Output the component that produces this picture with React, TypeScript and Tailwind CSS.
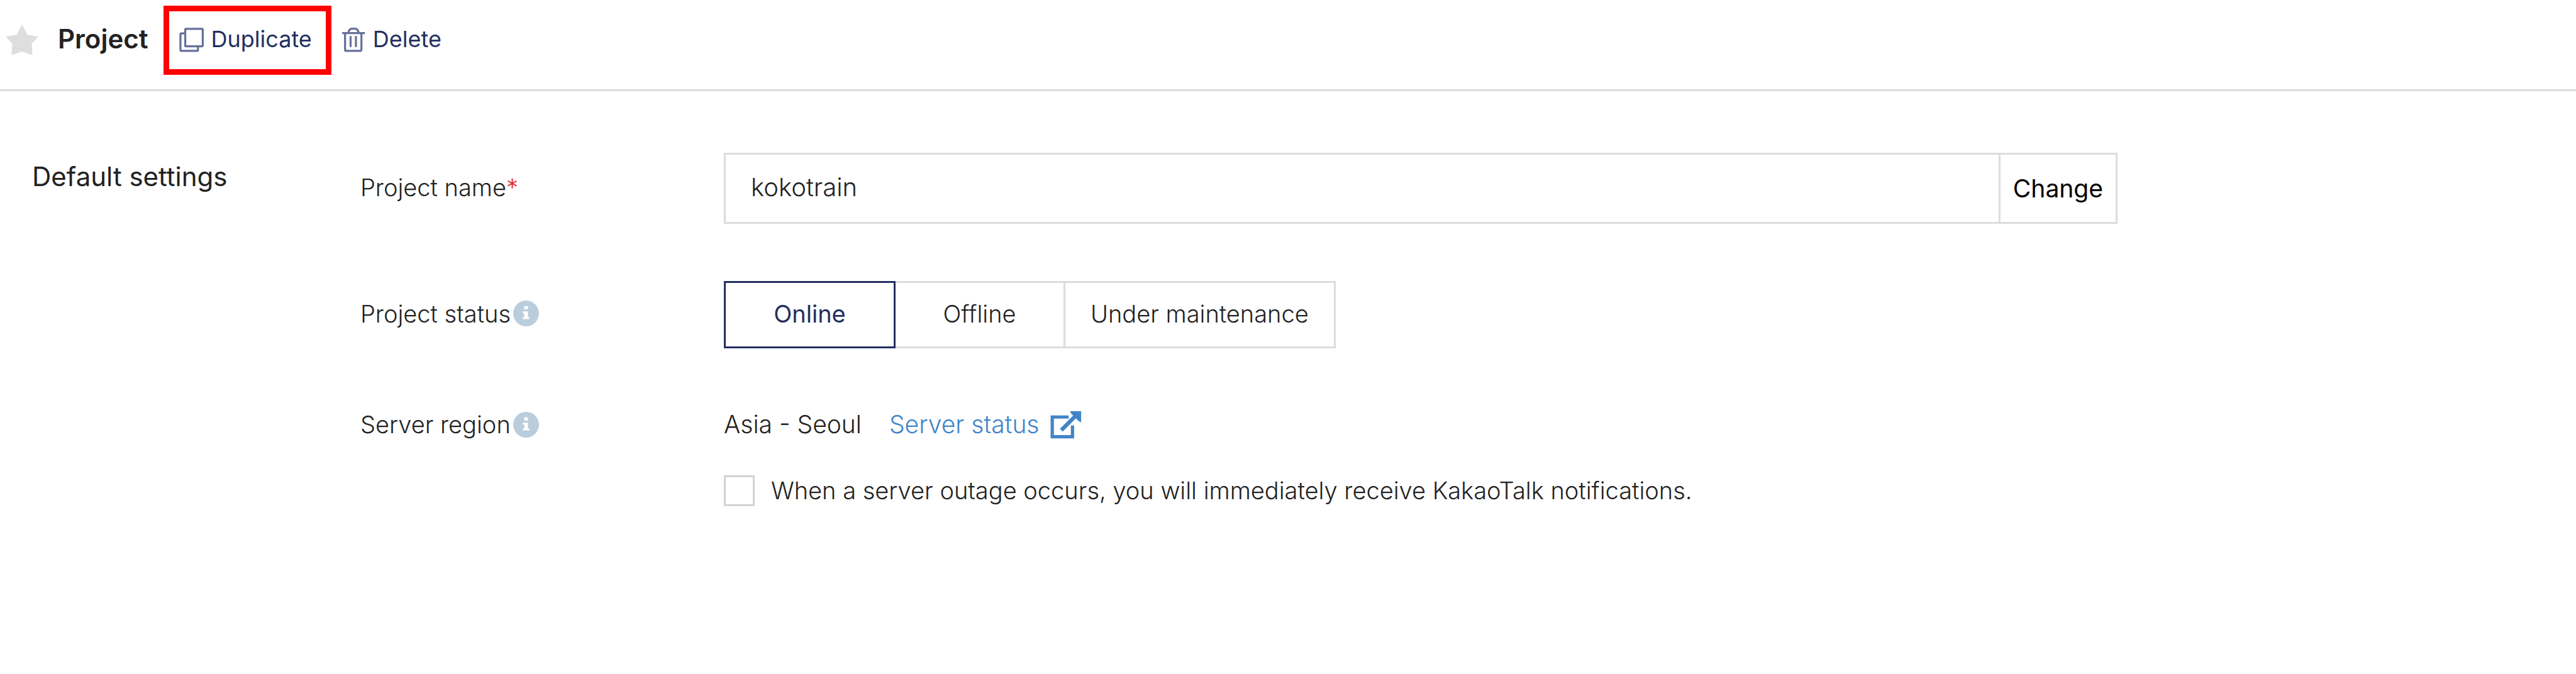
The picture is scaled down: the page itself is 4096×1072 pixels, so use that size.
import { useState } from 'react'
import type { ReactNode } from 'react'
import clsx from 'clsx'

const STATUSES = ['Online', 'Offline', 'Under maintenance']

function StarIcon() {
    return (
        <svg viewBox="3 3 18 18" className="h-[52px] w-[52px] fill-[#dedede]" aria-hidden="true">
            <path d="M12 3.3 14.9 9 21 10 17.3 14 17.8 20.2 12 18.2 6.2 20.2 6.7 14 3 10 9.1 9z" />
        </svg>
    )
}

function DuplicateIcon() {
    return (
        <svg viewBox="3 4 14 14" className="h-[41px] w-[41px] fill-none stroke-[#66709a]" strokeWidth="1.1" aria-hidden="true">
            <rect x="6.6" y="5.3" width="9.5" height="9.5" rx="0.4" />
            <path d="M6.6 7.8H4.5a.5.5 0 0 0-.5.5v8.5a.5.5 0 0 0 .5.5H13a.5.5 0 0 0 .5-.5v-2" />
        </svg>
    )
}

function TrashIcon() {
    return (
        <svg viewBox="3 4 13 14" className="h-[41px] w-[38px] fill-none stroke-[#66709a]" strokeWidth="1.1" aria-hidden="true">
            <path d="M3 7.6h12.4M6.4 7.6c.2-1.6 1-2.4 2.1-2.4h1.4c1.1 0 1.9.8 2.1 2.4" />
            <path d="M4.6 7.6v9.1a.6.6 0 0 0 .6.6h7.7a.6.6 0 0 0 .6-.6V7.6M7.6 9.2v6M10.5 9.2v6" />
        </svg>
    )
}

function InfoIcon() {
    return (
        <svg viewBox="0 0 14 14" className="h-[41px] w-[41px]" role="img" aria-label="More information">
            <circle cx="7" cy="7" r="7" fill="#bacddd" />
            <path fill="#fff" d="M6 3h2v1.8H6zM5.2 5.9H8v3.2h.8v1H5.2v-1H6V6.9h-.8z" />
        </svg>
    )
}

function ExternalIcon() {
    return (
        <svg viewBox="4 3 18 16" className="h-[46px] w-[52px]" aria-hidden="true">
            <path fill="none" stroke="#4284c8" strokeWidth="1.8" d="M14.5 6.9H5.4v10.9h11.2v-6.2" />
            <path fill="none" stroke="#4284c8" strokeWidth="2.2" d="M10.4 14.2 18.6 6" />
            <path fill="#4284c8" d="M15.2 3.7h6.2v6.2l-1.6-.9-3.8-3.8z" />
        </svg>
    )
}

interface IRowProps {
    label: ReactNode;
    children: ReactNode;
}

function Row({ label, children }: IRowProps) {
    return (
        <div className="grid grid-cols-[578px_1fr] items-center">
            <div className="flex items-center gap-1 pb-1">{label}</div>
            {children}
        </div>
    )
}

export default function App() {
    const [name, setName] = useState('kokotrain')
    const [status, setStatus] = useState('Online')
    const [notify, setNotify] = useState(false)

    return (
        <div className="bg-white font-['Inter','Noto_Sans_CJK_KR',sans-serif] text-[38px] leading-[60px] font-light text-[#222]">
            <header className="flex items-center border-b-3 border-[#dcdcdc] pt-[9px] pb-[23px] pl-[9px]">
                <button type="button" aria-label="Favorite">
                    <StarIcon />
                </button>
                <h1 className="ml-[31px] pb-1 text-[42px] font-semibold">Project</h1>
                {/* Highlighted action */}
                <div className="ml-6 flex h-[110px] items-center border-9 border-[#ff0000] px-[15px] pr-[22px] pb-1">
                    <button type="button" className="flex items-center gap-[11px] text-[36px] font-normal text-[#232f5f]">
                        <DuplicateIcon />
                        Duplicate
                    </button>
                </div>
                <button type="button" className="ml-[17px] flex items-center gap-[11px] pb-1 text-[36px] font-normal text-[#232f5f]">
                    <TrashIcon />
                    Delete
                </button>
            </header>

            <main className="grid grid-cols-[522px_1fr] pt-[98px] pb-20 pl-[51px]">
                <h2 className="pt-2 text-[42px] font-normal">Default settings</h2>

                <div className="flex flex-col gap-[91px]">
                    <Row
                        label={
                            <label htmlFor="project-name">
                                Project name<span className="text-[#e02b2b]">*</span>
                            </label>
                        }
                    >
                        <div className="flex h-[113px] max-w-[2216px] border-3 border-[#dcdcdc]">
                            <input
                                id="project-name"
                                type="text"
                                value={name}
                                onChange={(e) => setName(e.target.value)}
                                className="min-w-0 flex-1 px-10 pb-1 text-[40px] outline-none"
                            />
                            <button type="button" className="border-l-3 border-[#dcdcdc] px-5 text-[39px] font-normal text-black">
                                Change
                            </button>
                        </div>
                    </Row>

                    <Row label={<>Project status<InfoIcon /></>}>
                        <div className="flex h-[107px]">
                            {STATUSES.map((item, i) => (
                                <button
                                    key={item}
                                    type="button"
                                    aria-pressed={status === item}
                                    onClick={() => setStatus(item)}
                                    className={clsx(
                                        'border-y-3 border-r-3 px-10 pb-1',
                                        i === 0 ? 'min-w-[273px] border-l-3' : 'min-w-[270px]',
                                        status === item ? 'border-[#232f5f] font-normal text-[#232f5f]' : 'border-[#dcdcdc]'
                                    )}
                                >
                                    {item}
                                </button>
                            ))}
                        </div>
                    </Row>

                    <div>
                        <Row label={<>Server region<InfoIcon /></>}>
                            <div className="flex items-center pb-1 text-[39px]">
                                <span>Asia - Seoul</span>
                                <a href="#server-status" className="ml-11 flex items-center gap-4 text-[#4284c8]">
                                    Server status
                                    <ExternalIcon />
                                </a>
                            </div>
                        </Row>
                        <label className="mt-[41px] ml-[578px] flex items-center gap-[26px]">
                            <input
                                type="checkbox"
                                checked={notify}
                                onChange={(e) => setNotify(e.target.checked)}
                                className="h-[49px] w-[49px] appearance-none border-3 border-[#d2d2d2] checked:bg-[#232f5f]"
                            />
                            When a server outage occurs, you will immediately receive KakaoTalk notifications.
                        </label>
                    </div>
                </div>
            </main>
        </div>
    )
}
